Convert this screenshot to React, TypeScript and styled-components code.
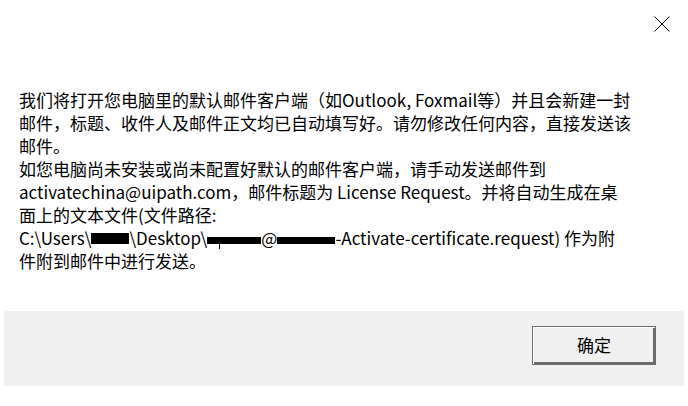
import React from "react";
import styled, { createGlobalStyle } from "styled-components";

const GlobalStyle = createGlobalStyle`
  html, body {
    margin: 0;
    padding: 0;
    background: #ffffff;
  }
  body {
    font-family: "Noto Sans CJK SC", "Noto Sans", sans-serif;
  }
`;

const Dialog = styled.div`
  width: 688px;
  height: 406px;
  display: flex;
  flex-direction: column;
  background: #ffffff;
  overflow: hidden;
`;

const TitleBar = styled.div`
  height: 48px;
  display: flex;
  justify-content: flex-end;
  align-items: flex-start;
  padding: 16px 18px 0 0;
  box-sizing: border-box;
`;

const CloseButton = styled.button`
  width: 16px;
  height: 16px;
  padding: 0;
  border: none;
  background: transparent;
  display: block;
  cursor: pointer;
  svg {
    display: block;
  }
`;

const Content = styled.div`
  flex: 1;
  padding: 40px 20px 0 19px;
  box-sizing: border-box;
`;

const Message = styled.p`
  margin: 0;
  font-family: "Noto Sans CJK SC", sans-serif;
  font-size: 17px;
  line-height: 23px;
  color: #000000;
  white-space: nowrap;
`;

const Redact = styled.span<{ $w: number; $h: number; $tail?: number }>`
  display: inline-block;
  position: relative;
  width: ${(p) => p.$w}px;
  height: ${(p) => p.$h}px;
  background: #000000;
  vertical-align: 1px;
  &::after {
    content: "";
    display: ${(p) => (p.$tail !== undefined ? "block" : "none")};
    position: absolute;
    left: ${(p) => p.$tail ?? 0}px;
    top: ${(p) => p.$h}px;
    width: 1px;
    height: 5px;
    background: #000000;
  }
`;

const Footer = styled.div`
  height: 75px;
  margin: 0 4px 20px 4px;
  background: #f0f0f0;
  display: flex;
  justify-content: flex-end;
  align-items: flex-start;
  padding: 15px 28px 0 0;
  box-sizing: border-box;
`;

const OkButton = styled.button`
  width: 124px;
  height: 39px;
  box-sizing: border-box;
  border: 1px solid #6b6b6b;
  box-shadow: inset 1px 1px 0 #ffffff, inset -2px -2px 0 #6b6b6b;
  background: #f0f0f0;
  font-family: "Noto Sans CJK SC", sans-serif;
  font-size: 17px;
  line-height: 20px;
  color: #000000;
  padding: 0 0 2px 0;
  cursor: pointer;
`;

export default function App() {
  return (
    <>
      <GlobalStyle />
      <Dialog>
        <TitleBar>
          <CloseButton aria-label="关闭">
            <svg width="16" height="16" viewBox="0 0 16 16">
              <path d="M0.5 0.5 L15.5 15.5 M15.5 0.5 L0.5 15.5" stroke="#000" strokeWidth="1" fill="none" />
            </svg>
          </CloseButton>
        </TitleBar>
        <Content>
          <Message>
            我们将打开您电脑里的默认邮件客户端（如Outlook, Foxmail等）并且会新建一封
            <br />
            邮件，标题、收件人及邮件正文均已自动填写好。请勿修改任何内容，直接发送该
            <br />
            邮件。
            <br />
            如您电脑尚未安装或尚未配置好默认的邮件客户端，请手动发送邮件到
            <br />
            activatechina@uipath.com，邮件标题为 License Request。并将自动生成在桌
            <br />
            面上的文本文件(文件路径:
            <br />
            {"C:\\Users\\"}
            <Redact $w={38} $h={11} />
            {"\\Desktop\\"}
            <Redact $w={54} $h={7} $tail={12} />
            {"@"}
            <Redact $w={58} $h={7} />
            {"-Activate-certificate.request) 作为附"}
            <br />
            件附到邮件中进行发送。
          </Message>
        </Content>
        <Footer>
          <OkButton>确定</OkButton>
        </Footer>
      </Dialog>
    </>
  );
}
